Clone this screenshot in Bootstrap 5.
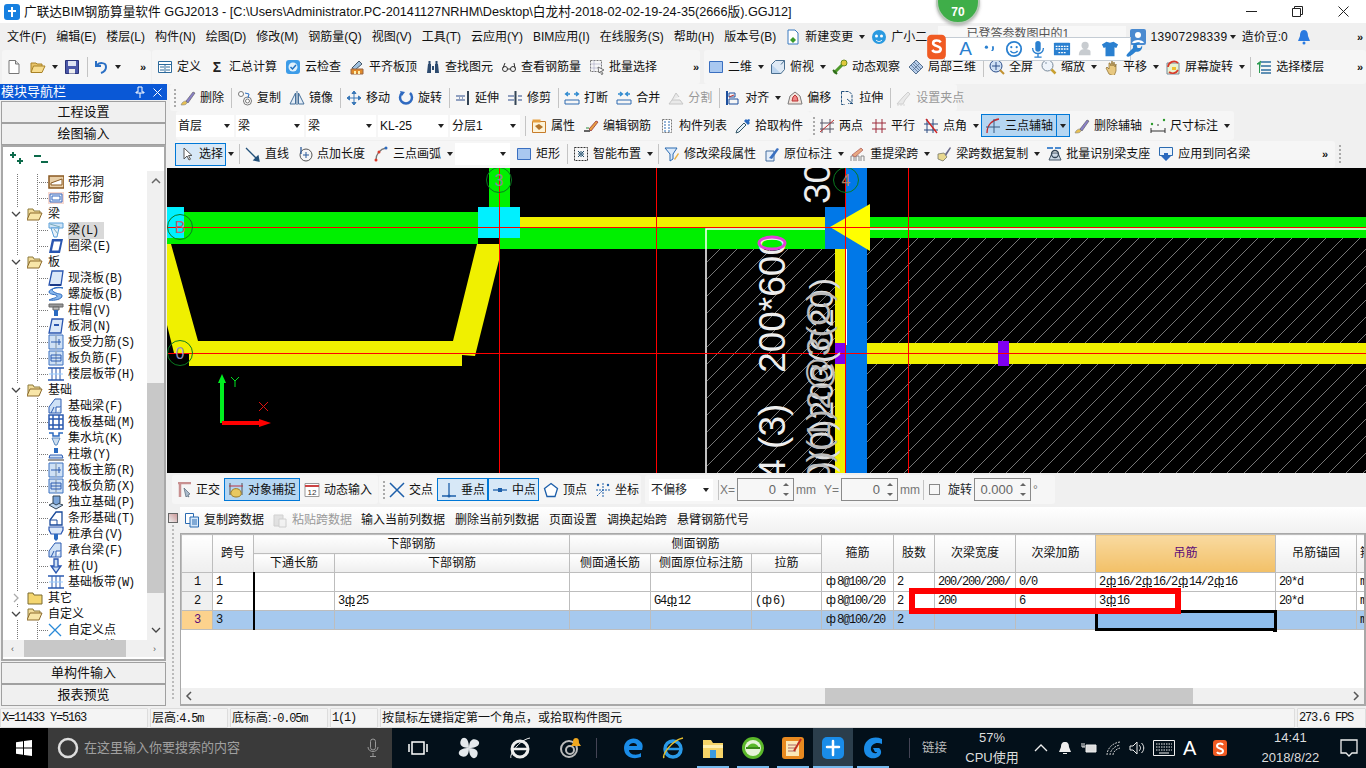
<!DOCTYPE html>
<html lang="zh">
<head>
<meta charset="utf-8">
<title>GGJ2013</title>
<link rel="stylesheet" href="https://cdn.jsdelivr.net/npm/bootstrap@5.3.0/dist/css/bootstrap.min.css">
<script src="https://cdn.jsdelivr.net/npm/bootstrap@5.3.0/dist/js/bootstrap.bundle.min.js"></script>
<style>
html,body{width:1366px;height:768px;overflow:hidden;margin:0}
body{position:relative;background:#f0f0f0;color:#111;font:12px/16px "Liberation Sans","Noto Sans CJK SC",sans-serif}
svg{flex:none;display:block}
.ic{width:16px;height:16px}
/* window chrome */
.titlebar{height:23px;background:#fff;font-size:12.7px;white-space:nowrap}
.titlebar .ttl{margin-left:4px}
.winbtn{width:46px}
.menubar{height:27px;padding-left:2px;position:relative}
.menubar>span{padding:0 5px}
.usr{margin-left:auto}
.inputbox{width:188px;height:21px;background:#f8f8f8;margin:0 4px 0 7px;padding-left:28px;overflow:hidden;color:#555}
.phone{letter-spacing:.35px}
/* toolbars */
.tb{background:#f6f6f6;border-radius:3px;white-space:nowrap}
.ti{display:flex;align-items:center;gap:4px;padding:0 4px;flex:none}
.ti.off{color:#999}
.ti.off svg{opacity:.5}
.ti.sel{background:#d7e8f7;border:1px solid #0078d7;padding:0 2px 0 3px;margin:0;height:23px}
.ti.sel2{background:#b5d6f2;border:1px solid #0078d7;padding:0 3px;height:23px}
.arr{width:10px;height:12px;flex:none;display:flex;align-items:center;justify-content:center}
.arr::after{content:"";border:3px solid transparent;border-top:4px solid #222;border-bottom:0}
.arr.sel2b{width:13px;height:23px;background:#b5d6f2;border:1px solid #0078d7;border-left:0}
.sepv{width:1px;height:20px;background:#c4c4c4;margin:0 1px 0 3px;flex:none}
.grp{width:2px;height:18px;flex:none;background:repeating-linear-gradient(#aaa 0 2px,transparent 2px 4px)}
.chev{font-size:11px;font-weight:700;letter-spacing:-1px;line-height:10px;flex:none}
.row1{height:34px}
.t1{width:149px;margin-left:2px;padding-left:0}
.t2{width:548px;margin-left:1px;padding-left:1px}
.t3{width:662px;margin-left:4px;padding-left:0}
.t1 .chev{margin-left:17px}
.t2 .chev{margin-left:auto;margin-right:2px}
.t3 .chev{margin-left:auto;margin-right:4px}
.mainarea{height:622px}
/* left panel */
.leftp{width:167px;flex:none}
.navtitle{height:16px;margin-bottom:1px;background:#0a58d6;color:#fff;font-size:13px;line-height:16px;padding:0 5px 0 1px}
.navbtn{width:165px;height:22px;margin-left:1px;padding:0;font-size:13px;line-height:20px;background:#f0f0f0;border:1px solid #a0a0a0;border-radius:0;color:#111}
.treebox{width:165px;height:516px;margin:0 0 1px 1px;border:2px solid #a8a8a8;background:#fff;overflow:hidden}
.treetop{height:24px;padding-left:6px;flex:none}
.treemid{height:469px;overflow:hidden;flex:none}
.treelist{width:146px;overflow:hidden;padding-top:3px}
.vbar{width:17px;flex:none;background:#f0f0f0}
.vthumb{height:210px;background:#c8c8c8;margin-top:196px;flex:none}
.sarr{font-size:9px;color:#555;line-height:14px;text-align:center;flex:none}
.hbar{height:17px;background:#f0f0f0;flex:none}
.hthumb{width:102px;height:17px;background:#c8c8c8;margin-left:6px}
.tn{height:16px;white-space:nowrap;display:flex;align-items:center;font-size:12px;
 background:repeating-linear-gradient(#777 0 1px,transparent 1px 2px) 14px 0/1px 100% no-repeat}
.tn .exp{width:12px;height:12px;margin-left:7px;flex:none;background:#fff}
.tn .fold{margin:0 5px 0 5px}
.tn.lf{padding-left:45px;gap:4px;
 background:repeating-linear-gradient(#777 0 1px,transparent 1px 2px) 14px 0/1px 100% no-repeat,
 repeating-linear-gradient(#777 0 1px,transparent 1px 2px) 34px 0/1px 100% no-repeat,
 repeating-linear-gradient(90deg,#777 0 1px,transparent 1px 2px) 34px 8px/11px 1px no-repeat}
.tn.cur>span{background:#d9d9d9;padding-right:6px}
.lat{font-family:"Liberation Mono",monospace;letter-spacing:-1.2px}
/* right side */
.rightp{width:1199px;flex:none}
.rr2{height:27px;padding-left:3px}
.rr3{height:29px;padding-left:9px}
.rr4{height:28px;padding-left:8px}
.r2a{width:787px}
.r3a{width:634px}
.r3b{width:424px;padding-left:3px}
.r4a{width:1160px;height:27px}
.r4a .chev{margin-left:auto;margin-right:8px}
.combo{height:22px;background:#fff;margin-right:2px;padding-left:2px;flex:none;justify-content:space-between;padding-right:2px}
.w58{width:58px}.w68{width:68px}.w70{width:70px}.w55{width:55px}.w64{width:64px}
.cad{height:305px;background:#000}
.cad text{font-family:"Liberation Sans",sans-serif}
.rr5{height:31px;padding-left:5px;margin-bottom:3px}
.r5a{width:206px;height:29px}
.r5b{width:262px;height:29px;margin-left:1px;padding-left:4px}
.r5c{width:410px;height:29px;margin-left:4px;padding-left:4px;color:#777}
.spin{width:57px;height:23px;border:1px solid #8a8a8a;background:#f7f7f7;text-align:right;padding-right:17px;line-height:21px;margin:0 2px;position:relative;flex:none;font-size:13px;color:#666}
.spin::after{content:"";position:absolute;right:4px;top:4px;border:3px solid transparent;border-bottom:3px solid #666;border-top:0}
.spin::before{content:"";position:absolute;right:4px;bottom:4px;border:3px solid transparent;border-top:3px solid #666;border-bottom:0}
.ckb{width:11px;height:11px;border:1px solid #888;background:#f7f7f7;margin:0 8px 0 4px;flex:none}
.gridwrap{height:199px;width:1199px}
.gripcol{width:13px;flex:none;background:repeating-linear-gradient(#bbb 0 2px,transparent 2px 4px) 5px 14px/2px 90% no-repeat}
.closebox{width:10px;height:10px;border:1px solid #666;margin:6px 0 0 1px;background:linear-gradient(45deg,#eee,#c99)}
.gridmain{width:1186px}
.subtb{height:26px;background:linear-gradient(#fff,#f1f1f1);padding-left:0}
.subtb .plain{padding:0 5px}
.gridbox{height:173px;background:#fff;border:1px solid #a8a8a8;border-width:1px 2px 2px 1px;overflow:hidden;position:relative;width:1186px}
.gridbox .gg{table-layout:fixed;width:1185px;border-color:#bdbdbd;margin:0;font-size:12px;--bs-table-bg:transparent}
.c31{width:31px}.c41{width:41px}.c81{width:81px}.c235{width:235px}.c101{width:101px}.c70{width:70px}.c72{width:72px}.c80{width:80px}.c180{width:180px}.c10{width:10px}
.gg th,.gg td{height:19px;padding:0 3px;line-height:15px;white-space:nowrap;overflow:hidden;border:1px solid #bdbdbd;color:#111;font-weight:400;vertical-align:middle}
.gg th{text-align:center;background:linear-gradient(#fff,#eee)}
.gg thead tr:first-child th[rowspan]{height:38px}
.gg td{font-family:"Liberation Mono","Noto Sans CJK SC",monospace;letter-spacing:-1.2px}
.gg td.rh{background:#f0f0f0;text-align:center}
.gg td.lk{border-right:2px solid #000}
.gg tr.curr td{background:#a6c9ee}
.gg tr.curr td.rh{background:#fcd28d;color:#5a0a78}
.gg th.hot{background:linear-gradient(#f9daa0,#f2c067);color:#5a0a78}
.gg tr.curr td.cel{background:#8fbdec;outline:3px solid #000;outline-offset:-2px}
.rb,.rb2{display:inline-block;width:12px;line-height:1;text-align:center;letter-spacing:0;font-family:"Liberation Sans",sans-serif}
.rb2{text-decoration:underline}
.hbar2{height:16px;background:#f0f0f0;flex:none;margin-top:auto}
.hthumb2{width:368px;height:16px;background:#c8c8c8;margin-left:628px}
.hbar2 svg{margin:0 2px}
.redbox{position:absolute;left:909px;top:588px;width:272px;height:26px;border:6px solid #f00;z-index:3}
.handle{position:absolute;left:1273px;top:628px;width:4px;height:4px;background:#000;z-index:3}
/* status + taskbar */
.statusb{height:22px;padding:2px 0 0 0;background:#f0f0f0}
.statusb>div{height:20px;background:#f4f4f4;border:1px solid #ddd;border-radius:1px;padding:0 1px;line-height:18px;margin-right:2px;overflow:hidden;white-space:nowrap;flex:none}
.s1{width:148px}.s2{width:78px}.s3{width:98px}.s4{width:48px}.s5{width:915px}.s6{width:69px;margin-right:0!important}
.taskb{height:40px;background:#03101a;color:#ddd}
.startb{width:48px;height:40px;background:#000}
.search{width:344px;height:40px;background:#3a3a3a;color:#a0a0a0;font-size:13px;padding-left:9px}
.search .q{margin:0 5px 0 0}
.search .mic{margin-left:auto;margin-right:13px}
.tk1{width:51px;height:40px;position:relative}
.tk2{width:40px;height:40px;position:relative}
.tk1 svg,.tk2 svg{width:24px;height:24px}
.tk2.on::after{content:"";position:absolute;left:4px;right:4px;bottom:0;height:2px;background:#76b9ed}
.tk2.act{background:#2b3e4c}
.tk2.act::after{left:0;right:0}
.tsep{width:1px;height:20px;background:#445;flex:none}
.trayt{color:#bbb;font-size:12.5px}
.cpu{width:60px;margin-left:15px;text-align:center;line-height:20px;font-size:13px}
.tray{gap:8px;margin-left:11px}
.clock{width:74px;margin-left:25px;text-align:center;line-height:20px;font-size:13px}
.notif{margin-left:12px}
/* overlays */
.scorebadge{position:absolute;left:936px;top:-20px;width:44px;height:44px;border-radius:50%;background:#3fae49;border:2px solid #b8c8b8;box-shadow:0 2px 3px #8888;color:#fff;font-size:12px;font-weight:700;text-align:center;padding-top:22px;z-index:5}
.sogou{position:absolute;left:944px;top:37px;width:187px;height:24px;background:#fff;border:1px solid #c4ccd4;z-index:6;padding-left:10px;color:#2a80d0}
.sogou svg{width:18px;height:18px;margin:0 1px}
.sogoulogo{position:absolute;left:925px;top:33px;width:23px;height:28px;z-index:7}
.sogoua{font-size:19px;width:21px;text-align:center;flex:none}
</style>
</head>
<body>
<svg width="0" height="0" class="position-absolute">
<defs>
<symbol id="new" viewBox="0 0 16 16"><path d="M3 1.5h6.5l3.5 3.5v9.5H3z" fill="#fff" stroke="#777"/><path d="M9.500 1.500v3.500H13" fill="#ddd" stroke="#777"/></symbol>
<symbol id="open" viewBox="0 0 16 16"><path d="M1 13V4h5l1 1h5v2" fill="#e8c46a" stroke="#a98226"/><path d="M3.500 7H15l-3 6.500H1z" fill="#f7dc8e" stroke="#a98226"/></symbol>
<symbol id="save" viewBox="0 0 16 16"><path d="M1.500 1.500h13v13h-13z" fill="#4b57a8" stroke="#2a3378"/><path d="M4 2h8v5H4z" fill="#dfe3f2"/><path d="M5 10h6v4.500H5z" fill="#eee"/></symbol>
<symbol id="undo" viewBox="0 0 16 16"><path d="M3 2v5h5M3.500 7C6 3 13 3 13 8c0 3-2 5-5 6" fill="none" stroke="#2a6fc4" stroke-width="2"/></symbol>
<symbol id="tbl" viewBox="0 0 16 16"><path d="M1.500 2.500h13v11h-13z" fill="#fff" stroke="#2c6a9c"/><path d="M1.500 5.500h13M3 8h4M3 11h4M9 8h4M9 11h4M8 5.500v8" stroke="#2c6a9c"/></symbol>
<symbol id="cld" viewBox="0 0 16 16"><rect x="1" y="1" width="14" height="14" rx="3" fill="#3d9ce8"/><circle cx="8" cy="8" r="4.500" fill="#dff0fc"/><path d="M5.500 8l2 2 3.500-4" fill="none" stroke="#2070c0" stroke-width="1.500"/></symbol>
<symbol id="lvl" viewBox="0 0 16 16"><path d="M3 9l7-7 3 3-7 6z" fill="#9fc0dd" stroke="#456"/><path d="M2 10h12v5H2z" fill="#e08a2a" stroke="#964"/><path d="M5 12h2v3H5zM9 12h2v3H9z" fill="#fff2b0"/></symbol>
<symbol id="bin" viewBox="0 0 16 16"><path d="M2 14l1-9h3v9zM10 14V5h3l1 9zM7 7h2v4H7zM3.500 2h2v3h-2zM10.500 2h2v3h-2z" fill="#2c4a6e"/></symbol>
<symbol id="gls" viewBox="0 0 16 16"><circle cx="4" cy="10" r="2.500" fill="none" stroke="#333"/><circle cx="12" cy="10" r="2.500" fill="none" stroke="#333"/><path d="M6.500 10h3M2 9l2-5M14 9l-1-5" stroke="#333" fill="none"/></symbol>
<symbol id="bsel" viewBox="0 0 16 16"><path d="M1.500 1.500h11v11h-11z" fill="none" stroke="#777" stroke-dasharray="2 1"/><path d="M1.500 5h11M1.500 9h11M5 1.500v11" stroke="#99b" stroke-dasharray="1 1"/><path d="M9 8l6 3-2.500 1 1.500 3-1.500.5-1-3L10 14z" fill="#fff" stroke="#444" stroke-width=".7"/></symbol>
<symbol id="r2d" viewBox="0 0 16 16"><path d="M1.500 2.500h13v11h-13z" fill="#a9c8f0" stroke="#3a6fc0"/></symbol>
<symbol id="cube" viewBox="0 0 16 16"><path d="M1.500 5.500h9.500v9H1.500z" fill="#bcd5ef" stroke="#4a6f90"/><path d="M1.500 5.500l4-4h9v9l-3.500 4M11 5.500l3.500-4" fill="#dfeaf5" stroke="#4a6f90"/></symbol>
<symbol id="orb" viewBox="0 0 16 16"><path d="M2 14L13 3" stroke="#4f9a2a" stroke-width="3"/><circle cx="12" cy="4" r="3" fill="#e0c83c" stroke="#6a8a20"/><path d="M1 11l4 4" stroke="#2f6a1a" stroke-width="2"/></symbol>
<symbol id="l3d" viewBox="0 0 16 16"><path d="M8 1l7 7-7 7-7-7z" fill="#b7cdea" stroke="#55708f"/><path d="M4.500 4.500l7 7M11.500 4.500l-7 7M6 3l7 7M3 6l7 7" stroke="#55708f" stroke-width=".8"/></symbol>
<symbol id="fsc" viewBox="0 0 16 16"><circle cx="7" cy="7" r="6" fill="#cfe0f5" stroke="#2d4f8a"/><path d="M7 3v8M3 7h8" stroke="#2d4f8a"/><path d="M11 11l4 4" stroke="#c09030" stroke-width="2"/></symbol>
<symbol id="zm" viewBox="0 0 16 16"><circle cx="6.500" cy="6.500" r="5.500" fill="#eef4fb" stroke="#789"/><path d="M4 4h2" stroke="#89a"/><path d="M10.500 10.500l4 4" stroke="#c8a030" stroke-width="2.500"/></symbol>
<symbol id="hnd" viewBox="0 0 16 16"><path d="M6 15L3 9l1-1 2 2V4l1 0 1 3 1-5 1 5 1-4 1 5 1-3v7l-2 5z" fill="#e8c880" stroke="#8a6a2a" stroke-width=".7"/></symbol>
<symbol id="rsc" viewBox="0 0 16 16"><path d="M2 4h12v11H2z" fill="#e9f2d0" stroke="#789"/><path d="M3 8a6 6 0 0 1 10-4" fill="none" stroke="#d83a2a" stroke-width="1.700"/><path d="M13 11a6 6 0 0 1-9 2" fill="none" stroke="#d83a2a" stroke-width="1.700"/><path d="M7 8h4v3H7z" fill="#f0c030"/></symbol>
<symbol id="flr" viewBox="0 0 16 16"><path d="M5 3h10M5 7h10M5 11h10M5 14h10" stroke="#2f6fa0" stroke-width="1.500"/><path d="M5 2L1 5h2.500v9" fill="#2a9a50" stroke="#2a9a50"/></symbol>
<symbol id="del" viewBox="0 0 16 16"><path d="M1 15c1-3 3-4 5-4l1 2c-1 2-3 2-6 2z" fill="#e8c050" stroke="#888" stroke-width=".6"/><path d="M6 11l7-9 2 1-7 10z" fill="#8a80c8" stroke="#555" stroke-width=".6"/></symbol>
<symbol id="cpy" viewBox="0 0 16 16"><circle cx="4" cy="4" r="2.500" fill="#fff" stroke="#777"/><circle cx="10.500" cy="11" r="4" fill="#fff" stroke="#777"/><circle cx="10.500" cy="11" r="2" fill="none" stroke="#777"/><path d="M8 3l4 1-1 4" fill="none" stroke="#2a6fc4"/></symbol>
<symbol id="mir" viewBox="0 0 16 16"><path d="M6.500 3L1 14h5.500zM9.500 3L15 14H9.500z" fill="#e6eef7" stroke="#46709a"/><path d="M8 1v14" stroke="#46709a"/></symbol>
<symbol id="mov" viewBox="0 0 16 16"><path d="M8 1v14M1 8h14M8 1L6 3.500h4zM8 15l-2-2.500h4zM1 8l2.500-2v4zM15 8l-2.500-2v4z" fill="#3a78b8" stroke="#3a78b8"/></symbol>
<symbol id="rot" viewBox="0 0 16 16"><path d="M4 3a6 6 0 1 0 8 0" fill="none" stroke="#2f6ac0" stroke-width="2.500"/><path d="M2 1l5 1-3 4z" fill="#2f6ac0"/></symbol>
<symbol id="ext" viewBox="0 0 16 16"><path d="M1 6h9M1 10h9" stroke="#2a4a8a"/><path d="M4 8h1M7 8h1" stroke="#2a4a8a"/><path d="M13 1v14" stroke="#345" stroke-width="2"/></symbol>
<symbol id="trm" viewBox="0 0 16 16"><path d="M1 6h6M1 10h6M11 6h4M11 10h4" stroke="#2a4a8a"/><path d="M8.500 1v14" stroke="#345" stroke-width="2"/></symbol>
<symbol id="brk" viewBox="0 0 16 16"><path d="M1 10h14M1 14h14M1 10v4M15 10v4" stroke="#2f6ab0"/><path d="M2 4h4M14 4h-4M4 2L1.500 4 4 6M12 2l2.500 2L12 6" fill="none" stroke="#2f8ad0" stroke-width="1.300"/></symbol>
<symbol id="mrg" viewBox="0 0 16 16"><path d="M1 10h14M1 14h14M1 10v4M15 10v4" stroke="#2f6ab0"/><path d="M2 4h4M14 4h-4M4 2L6.500 4 4 6M12 2L9.500 4 12 6" fill="none" stroke="#2f8ad0" stroke-width="1.300"/></symbol>
<symbol id="spl" viewBox="0 0 16 16"><path d="M1 14h14l-3-4H4zM4 10l4-7 3 4" fill="#ddd" stroke="#999"/></symbol>
<symbol id="alg" viewBox="0 0 16 16"><path d="M2 1v14" stroke="#1d4f9c" stroke-width="2"/><path d="M4 3h6v4H4zM4 9h9v5H4z" fill="none" stroke="#1d4f9c"/><path d="M4 7l5-2" stroke="#c03030"/></symbol>
<symbol id="ofs" viewBox="0 0 16 16"><path d="M1 14l2-8 5-4 5 4 2 8z" fill="#f4e4dc" stroke="#7a7a7a"/><path d="M5 11l1-4 2-2 2 2 1 4z" fill="#e88" stroke="#b33"/></symbol>
<symbol id="strt" viewBox="0 0 16 16"><path d="M2.500 1.500H10l3 3v9h-4M2.500 1.500v13H6" fill="none" stroke="#24527e" stroke-dasharray="3 1"/><path d="M8 9l6 5" stroke="#24527e"/></symbol>
<symbol id="gip" viewBox="0 0 16 16"><path d="M1 14l6-7 5-5 2 2-5 6-2 4z" fill="#ddd" stroke="#aaa"/><path d="M1 15h8" stroke="#bbb" stroke-dasharray="2 1"/></symbol>
<symbol id="atr" viewBox="0 0 16 16"><path d="M1.500 3.500h13v11h-13z" fill="#fdf3d8" stroke="#c77c2a"/><path d="M1.500 1.500h8v3h-8z" fill="#e7a040"/><path d="M4 8l4-2 4 3-4 3z" fill="#b4752a"/></symbol>
<symbol id="edt" viewBox="0 0 16 16"><path d="M1 13h6" stroke="#333" stroke-width="1.500"/><path d="M6 11l7-8 2 1-7 9z" fill="#e8a040" stroke="#933" stroke-width=".8"/><path d="M3 10h3" stroke="#2c8a3a"/></symbol>
<symbol id="lst" viewBox="0 0 16 16"><path d="M3.500 1.500h9v13h-9z" fill="#fff" stroke="#777" stroke-dasharray="2 1"/><path d="M5 4h2M9 4h2M5 7h2M9 7h2M5 10h2M9 10h2M5 13h2M9 13h2" stroke="#2a6ab0"/></symbol>
<symbol id="pck" viewBox="0 0 16 16"><path d="M1 15l1-3 7-7 2 2-7 7z" fill="#e6f2fb" stroke="#356"/><path d="M9 3l4 4 2-2-1-1 1-2-1-1-2 1-1-1z" fill="#2a6ac0"/></symbol>
<symbol id="twp" viewBox="0 0 16 16"><path d="M3 1v14M11 1v14M1 5h14M1 11h14" stroke="#556"/><path d="M1 14L15 2" stroke="#c03030"/></symbol>
<symbol id="par" viewBox="0 0 16 16"><path d="M5 1v14M11 1v14M1 5h14M1 11h14" stroke="#9c2a3a"/></symbol>
<symbol id="ang" viewBox="0 0 16 16"><path d="M4 1v14M10 1v14M1 6h14M1 12h14" stroke="#2a4a80"/><path d="M3 1l11 14" stroke="#d02020" stroke-width="1.300"/></symbol>
<symbol id="arc3" viewBox="0 0 16 16"><path d="M2 15C2 7 7 2 14 1" fill="none" stroke="#c8282a" stroke-width="1.300"/><path d="M1 9h14M9 1v14" stroke="#3a5a80"/></symbol>
<symbol id="dim" viewBox="0 0 16 16"><path d="M1 10v5M15 10v5M1 13h14" stroke="#333"/><circle cx="2" cy="6" r="1.200" fill="#2a9a2a"/><circle cx="14" cy="2" r="1.200" fill="#2a9a2a"/><circle cx="8" cy="7" r="1" fill="#777"/></symbol>
<symbol id="sel" viewBox="0 0 16 16"><path d="M5 2v11l3-3 2 4 1.500-.8-2-3.700H13z" fill="#fff" stroke="#555"/></symbol>
<symbol id="lin" viewBox="0 0 16 16"><path d="M1 2l12 12M14 15l-5-1 4-4z" stroke="#23517a" stroke-width="1.300" fill="#23517a"/></symbol>
<symbol id="pln" viewBox="0 0 16 16"><circle cx="9" cy="9" r="6" fill="none" stroke="#555"/><path d="M9 6v6M6 9h6" stroke="#2a5a9a"/><path d="M4 1v7" stroke="#2a5a9a" stroke-width="1.300"/></symbol>
<symbol id="arc" viewBox="0 0 16 16"><path d="M3 14C3 8 7 3 13 2" fill="none" stroke="#777" stroke-width="1.300"/><circle cx="3" cy="14" r="1.500" fill="#d83a2a"/><circle cx="6" cy="6" r="1.500" fill="#d83a2a"/><circle cx="13" cy="2" r="1.500" fill="#2a6ac0"/></symbol>
<symbol id="smt" viewBox="0 0 16 16"><path d="M1.500 1.500h13v13h-13z" fill="none" stroke="#333" stroke-dasharray="2 1"/><path d="M5 8h6M8 5v6M5 5l2 2M11 5L9 7M5 11l2-2M11 11L9 9" stroke="#1a4a6a"/></symbol>
<symbol id="flt" viewBox="0 0 16 16"><path d="M1 2h12L9 8v5l-3 2V8z" fill="#dbeafa" stroke="#2a6ab0"/><path d="M10 13l4-6 1 1-4 6z" fill="#e8b040"/></symbol>
<symbol id="mrk" viewBox="0 0 16 16"><path d="M2 5h8v10H2z" fill="#e4eefa" stroke="#456fa0"/><path d="M5 12L13 2l2 1-7 10z" fill="#3a70c0"/></symbol>
<symbol id="rex" viewBox="0 0 16 16"><path d="M1 15v-5h3v5M6 15v-5h3v5M11 15v-5h3v5" fill="none" stroke="#888"/><path d="M2 9l9-7 2 2-8 7z" fill="#e8a880" stroke="#a55" stroke-width=".7"/></symbol>
<symbol id="brm" viewBox="0 0 16 16"><path d="M2 8l6-1 3 4-4 4-5-2z" fill="#e8d890" stroke="#776" stroke-width=".8"/><path d="M9 8l5-7 1 1-5 8z" fill="#6a6a8a"/></symbol>
<symbol id="bid" viewBox="0 0 16 16"><path d="M1 1h6v2H1zM9 1h6v2H9z" fill="#4a8ad0"/><path d="M3 14l3-7h6l3 7z" fill="#cdd9e6" stroke="#456"/><circle cx="9" cy="8" r="3.500" fill="none" stroke="#345" stroke-width="1.300"/></symbol>
<symbol id="apl" viewBox="0 0 16 16"><path d="M1.500 1.500h13v8h-13z" fill="#eaf3fc" stroke="#2a6ab0"/><path d="M6 7h4v3h3l-5 5-5-5h3z" fill="#2a6ac0"/></symbol>
<symbol id="ort" viewBox="0 0 16 16"><path d="M2 1h13M4 1v14" stroke="#c89090" stroke-width="2.500"/><path d="M8 6l6 6-2 1 1 2-2-1-1 1z" fill="#abc" stroke="#567" stroke-width=".7"/></symbol>
<symbol id="snp" viewBox="0 0 16 16"><path d="M2 1v12M14 1v12" stroke="#555"/><path d="M1 4h14" stroke="#b34"/><path d="M3 10c2-5 9-4 10 0s-2 5-5 5-6-2-5-5z" fill="#e8c860" stroke="#9a7a28"/></symbol>
<symbol id="dyn" viewBox="0 0 16 16"><path d="M1 1.500h14v13H1z" fill="#fff" stroke="#999"/><path d="M1 4h14" stroke="#c44" stroke-width="2"/><text x="8" y="13" font-size="8" text-anchor="middle" fill="#333">12</text></symbol>
<symbol id="xpt" viewBox="0 0 16 16"><path d="M1 1l14 14M15 1L1 15" stroke="#1d5faa" stroke-width="1.500"/></symbol>
<symbol id="prp" viewBox="0 0 16 16"><path d="M8 1v13M1 14h14" stroke="#1d5faa" stroke-width="1.300"/><circle cx="8" cy="14" r="1.500" fill="#1d5faa"/></symbol>
<symbol id="mid" viewBox="0 0 16 16"><path d="M1 8h14" stroke="#1d5faa" stroke-width="1.300"/><path d="M6 6h4v4H6z" fill="#1d5faa"/></symbol>
<symbol id="vtx" viewBox="0 0 16 16"><path d="M8 1.500l6.500 5-2.500 8H4l-2.500-8z" fill="#fff" stroke="#1d5faa" stroke-width="1.300"/></symbol>
<symbol id="crd" viewBox="0 0 16 16"><path d="M2 14L8 8M8 1v14M1 8h14" stroke="#1d5faa" stroke-dasharray="2 1"/><circle cx="3" cy="3" r="1.200" fill="#1d5faa"/><circle cx="13" cy="3" r="1.200" fill="#1d5faa"/></symbol>
<symbol id="cpd" viewBox="0 0 16 16"><path d="M1.500 1.500h8v10h-8z" fill="#fff" stroke="#2a6ab0"/><path d="M6 5h8.500v10H6z" fill="#d6e8fa" stroke="#2a6ab0"/><path d="M8 8h5M8 10h5M8 12h5" stroke="#2a6ab0"/></symbol>
<symbol id="pst" viewBox="0 0 16 16"><path d="M2 3h9v11H2z" fill="#ccc" stroke="#aaa"/><path d="M7 7h7v8H7z" fill="#eee" stroke="#aaa"/></symbol>
<!-- tree icons -->
<symbol id="t-hole" viewBox="0 0 16 16"><path d="M1 2h15v12H1z" fill="#e8cfa8" stroke="#8a5a22" stroke-width="1.500"/><path d="M3 9L14 5v6H3z" fill="#fff" stroke="#8a5a22"/></symbol>
<symbol id="t-win" viewBox="0 0 16 16"><path d="M0 2h16v12H0z" fill="#f6d8d0"/><path d="M2 4h12v8H2z" fill="#e4eefb" stroke="#3a6ac0"/><path d="M4 6h8v4H4z" fill="#fff" stroke="#3a6ac0"/></symbol>
<symbol id="t-beam" viewBox="0 0 16 16"><path d="M1 1h14v5H1z" fill="#cfe3f6" stroke="#5aa0d8"/><path d="M3 6h8l-2 9H6z" fill="#e6f0fa" stroke="#5aa0d8"/><path d="M2 2l10 3M6 7l4 5" stroke="#7ab"/></symbol>
<symbol id="t-ring" viewBox="0 0 16 16"><path d="M4 1h11l-3 14H1z" fill="#2a56b0"/><path d="M6 3.500h6.500l-2 9H4z" fill="#fff"/></symbol>
<symbol id="t-slab" viewBox="0 0 16 16"><path d="M4 1h11l-2 14H1z" fill="#dbe8f8" stroke="#2a56b0" stroke-width="1.300"/><path d="M2 15h11" stroke="#1a3a8a" stroke-width="2"/></symbol>
<symbol id="t-sp" viewBox="0 0 16 16"><path d="M15 2C8 0 1 3 6 6s8 1 8 4-7 5-13 4c4-2 8-2 8-4S1 9 1 6s8-5 14-4z" fill="#8ab8ec" stroke="#2a6ac0"/></symbol>
<symbol id="t-cap" viewBox="0 0 16 16"><path d="M1 2h14v3H1z" fill="#999" stroke="#666"/><path d="M5 5h6v3H5z" fill="#bbb" stroke="#666"/><path d="M6 8h4v6H6z" fill="#2a6ac0"/></symbol>
<symbol id="t-sh" viewBox="0 0 16 16"><path d="M4 1h11l-2 14H1z" fill="#dbe8f8" stroke="#2a56b0" stroke-width="1.300"/><path d="M6 6h5v2H6z" fill="#2a56b0"/></symbol>
<symbol id="t-rb" viewBox="0 0 16 16"><path d="M1 1h14v14H1z" fill="#cfe1f5" stroke="#3a70c0"/><path d="M8 1v14" stroke="#9ab" stroke-width="1.500"/><path d="M3 8h10M11 5v6" stroke="#2a5ab0"/></symbol>
<symbol id="t-rn" viewBox="0 0 16 16"><path d="M1 1h14v14H1z" fill="#cfe1f5" stroke="#3a70c0"/><path d="M8 1v14" stroke="#9ab" stroke-width="1.500"/><path d="M3 5h10v6H3zM3 8h10" fill="none" stroke="#2a5ab0"/></symbol>
<symbol id="t-bd" viewBox="0 0 16 16"><path d="M0 2h16M0 14h16" stroke="#2a5ab0" stroke-width="1.500"/><path d="M4 2v12M8 2v12M12 2v12" stroke="#2a5ab0"/><path d="M1 8h14" stroke="#9cf"/></symbol>
<symbol id="t-fb" viewBox="0 0 16 16"><path d="M1 15V9l6-8h6v14z" fill="#cfe1f5" stroke="#2a5ab0"/><path d="M8 15V9h5M3 15l3-6" fill="#fff" stroke="#2a5ab0"/></symbol>
<symbol id="t-rf" viewBox="0 0 16 16"><path d="M1 1h14v14H1z" fill="#fff" stroke="#2a5ab0" stroke-width="1.500"/><path d="M1 5h14M1 11h14M5 1v14M11 1v14" stroke="#2a5ab0" stroke-width="1.500"/></symbol>
<symbol id="t-pit" viewBox="0 0 16 16"><path d="M1 3h4v3h6V3h4" fill="none" stroke="#2a6ac0" stroke-width="1.500"/><path d="M4 8h8l-3 7H7z" fill="#cde" stroke="#5a8ac0"/></symbol>
<symbol id="t-dun" viewBox="0 0 16 16"><path d="M6 2h4v5H6z" fill="#2a6ac0"/><path d="M2 9h12l1 3H1z" fill="#cfe1f5" stroke="#2a5ab0"/><path d="M0 13h16v2H0z" fill="#999"/></symbol>
<symbol id="t-ind" viewBox="0 0 16 16"><path d="M1 11l6-3 8 3-7 4z" fill="#bcd5ef" stroke="#345"/><path d="M5 9V2h7v7l-4 2z" fill="#7aa4d8" stroke="#345"/></symbol>
<symbol id="t-str" viewBox="0 0 16 16"><path d="M2 15V10l6-8h6v13z" fill="#fff" stroke="#1a4a9a" stroke-width="1.300"/><path d="M2 10h7v5" fill="none" stroke="#1a4a9a"/></symbol>
<symbol id="t-pc" viewBox="0 0 16 16"><path d="M1 1h14v3l-2 4H3L1 4z" fill="#dbe8f8" stroke="#2a56b0" stroke-width="1.200"/><path d="M6 8h4v5l-2 2-2-2z" fill="#2a6ac0"/></symbol>
<symbol id="t-pl" viewBox="0 0 16 16"><path d="M6 1h4v7h3l-5 7-5-7h3z" fill="#cfe1f5" stroke="#2a56b0" stroke-width="1.300"/><path d="M4 9h8" stroke="#2a56b0"/></symbol>
<symbol id="t-pt" viewBox="0 0 16 16"><path d="M1 2l12 12M13 2L1 14" stroke="#2a8ad8" stroke-width="1.300"/></symbol>
<symbol id="folder" viewBox="0 0 16 16"><path d="M1 13V3h5l1 2h6v2" fill="#f2dc9a" stroke="#8c7a3c"/><path d="M3 7h12l-3 7H0z" fill="#f8e6a8" stroke="#8c6a2c"/></symbol>
<symbol id="folderc" viewBox="0 0 16 16"><path d="M1 3h5l1 2h8v9H1z" fill="#f4d670" stroke="#7a6a30"/></symbol>
<symbol id="cdn" viewBox="0 0 12 12"><path d="M2 4l4 4 4-4" fill="none" stroke="#444" stroke-width="1.300"/></symbol>
<symbol id="crt" viewBox="0 0 12 12"><path d="M4 2l4 4-4 4" fill="none" stroke="#aaa" stroke-width="1.300"/></symbol>
<symbol id="crtd" viewBox="0 0 12 12"><path d="M4 2l4 4-4 4" fill="none" stroke="#555" stroke-width="1.500"/></symbol>
<symbol id="cltd" viewBox="0 0 12 12"><path d="M8 2L4 6l4 4" fill="none" stroke="#555" stroke-width="1.500"/></symbol>
<symbol id="sup" viewBox="0 0 12 12"><path d="M2 8l4-4 4 4" fill="none" stroke="#666" stroke-width="1.500"/></symbol>
<pattern id="hat" width="17" height="17" patternUnits="userSpaceOnUse"><path d="M0 17L17 0" stroke="#a8a8a8" stroke-width=".7"/></pattern>
</defs>
</svg>

<div class="scorebadge">70</div>
<svg class="sogoulogo" viewBox="0 0 24 33"><rect x="1" y="2" width="22" height="29" rx="5" fill="#f05a22"/><path d="M17 11c-2-3-9-3-9 1 0 4 9 3 9 7 0 5-8 4-10 1" fill="none" stroke="#fff" stroke-width="3"/></svg>
<div class="sogou d-flex align-items-center gap-1">
  <span class="sogoua">A</span>
  <svg viewBox="0 0 20 20"><circle cx="6" cy="8" r="1.800" fill="#2a80d0"/><path d="M12 11c1 1 2-1 1-4" stroke="#2a80d0" stroke-width="2" fill="none"/></svg>
  <svg viewBox="0 0 20 20"><circle cx="10" cy="10" r="8" fill="none" stroke="#2a80d0" stroke-width="2"/><circle cx="7" cy="8" r="1.200" fill="#2a80d0"/><circle cx="13" cy="8" r="1.200" fill="#2a80d0"/><path d="M6 12c2 3 6 3 8 0" fill="none" stroke="#2a80d0" stroke-width="1.500"/></svg>
  <svg viewBox="0 0 20 20"><rect x="7" y="1" width="6" height="12" rx="3" fill="#2a80d0"/><path d="M4 9c0 8 12 8 12 0M10 15v4M6 19h8" fill="none" stroke="#2a80d0" stroke-width="1.500"/></svg>
  <svg viewBox="0 0 20 20"><rect x="1" y="3" width="18" height="14" rx="1" fill="#2a80d0"/><path d="M3 7h14M3 10h14M6 14h8" stroke="#fff" stroke-width="1.500" stroke-dasharray="2 1"/></svg>
  <svg viewBox="0 0 20 20"><circle cx="9" cy="6" r="4" fill="#c8ccd0"/><path d="M2 17c0-6 4-7 7-7s6 1 6 3v4z" fill="#c8ccd0"/></svg>
  <svg viewBox="0 0 20 20"><path d="M6 2l4 1 4-1 5 3-2 4-2-1v10H5V8L3 9 1 5z" fill="#2a80d0"/></svg>
  <svg viewBox="0 0 20 20"><path d="M2 18c-1-1 0-2 7-9-1-4 3-8 8-6l-4 3 1 3 3 0 2-3c1 5-4 8-7 7-7 6-9 6-10 5z" fill="#2a80d0"/></svg>
</div>
<div class="redbox"></div>
<div class="handle"></div>

<!-- title -->
<div class="titlebar d-flex align-items-center">
  <svg class="ic ms-1" viewBox="0 0 16 16"><rect width="16" height="16" rx="3" fill="#1780e0"/><path d="M8 3v10M4 7h8" stroke="#fff" stroke-width="2"/></svg>
  <span class="ttl">广联达BIM钢筋算量软件 GGJ2013 - [C:\Users\Administrator.PC-20141127NRHM\Desktop\白龙村-2018-02-02-19-24-35(2666版).GGJ12]</span>
  <div class="ms-auto d-flex">
    <div class="winbtn d-flex justify-content-center"><svg width="11" height="11" viewBox="0 0 11 11"><path d="M0 5.500h11" stroke="#222"/></svg></div>
    <div class="winbtn d-flex justify-content-center"><svg width="11" height="11" viewBox="0 0 11 11"><path d="M.5 2.500h8v8h-8zM2.500 2.500v-2h8v8h-2" fill="none" stroke="#222"/></svg></div>
    <div class="winbtn d-flex justify-content-center"><svg width="11" height="11" viewBox="0 0 11 11"><path d="M.5.500l10 10M10.500.500l-10 10" stroke="#222"/></svg></div>
  </div>
</div>

<!-- menu -->
<div class="menubar d-flex align-items-center">
  <span>文件(F)</span><span>编辑(E)</span><span>楼层(L)</span><span>构件(N)</span><span>绘图(D)</span><span>修改(M)</span><span>钢筋量(Q)</span><span>视图(V)</span><span>工具(T)</span><span>云应用(Y)</span><span>BIM应用(I)</span><span>在线服务(S)</span><span>帮助(H)</span><span>版本号(B)</span>
  <div class="ti"><svg class="ic" viewBox="0 0 16 16"><path d="M3 1h7l3 3v11H3z" fill="#fff" stroke="#3a7ac0"/><path d="M8 8l3 3-3 3-3-3z" fill="#3a9a2a"/></svg>新建变更</div><div class="arr"></div>
  <div class="ti"><svg class="ic" viewBox="0 0 16 16"><circle cx="8" cy="8" r="7" fill="#2a9ae0"/><circle cx="5.500" cy="7" r="1.500" fill="#fff"/><circle cx="10.500" cy="7" r="1.500" fill="#fff"/><path d="M5 11c2 2 4 2 6 0" stroke="#fff" fill="none"/></svg>广小二</div>
  <div class="inputbox">已登答参数图中的1</div>
  <svg class="ic" viewBox="0 0 16 16"><rect width="16" height="16" rx="2" fill="#4a8ad0"/><circle cx="8" cy="6" r="3" fill="#fff"/><path d="M2 14c1-4 11-4 12 0z" fill="#fff"/></svg>
  <span class="p-0 ms-1 phone">13907298339</span><div class="arr"></div><span class="p-0 ms-1">造价豆:0</span>
  <svg class="ic ms-2" viewBox="0 0 16 16"><path d="M8 1c3 0 4 3 4 6l2 5H2l2-5c0-3 1-6 4-6z" fill="#2a7ae0"/><circle cx="8" cy="14" r="1.500" fill="#2a7ae0"/></svg>
  <span class="chev usr pe-1">»</span>
</div>

<!-- toolbar row 1 -->
<div class="row1 d-flex align-items-center">
  <div class="tb t1 d-flex align-items-center h-100">
    <div class="ti"><svg class="ic"><use href="#new"/></svg></div>
    <div class="ti"><svg class="ic"><use href="#open"/></svg></div><div class="arr"></div>
    <div class="ti"><svg class="ic"><use href="#save"/></svg></div><div class="sepv"></div>
    <div class="ti"><svg class="ic"><use href="#undo"/></svg></div><div class="arr"></div>
    <span class="chev">»</span>
  </div>
  <div class="tb t2 d-flex align-items-center h-100">
    <div class="ti"><svg class="ic"><use href="#tbl"/></svg>定义</div>
    <div class="ti"><svg class="ic" viewBox="0 0 16 16"><text x="8" y="13" font-size="14" font-weight="700" text-anchor="middle" fill="#222">Σ</text></svg>汇总计算</div>
    <div class="ti"><svg class="ic"><use href="#cld"/></svg>云检查</div>
    <div class="ti"><svg class="ic"><use href="#lvl"/></svg>平齐板顶</div>
    <div class="ti"><svg class="ic"><use href="#bin"/></svg>查找图元</div>
    <div class="ti"><svg class="ic"><use href="#gls"/></svg>查看钢筋量</div>
    <div class="ti"><svg class="ic"><use href="#bsel"/></svg>批量选择</div>
    <span class="chev">»</span>
  </div>
  <div class="tb t3 d-flex align-items-center h-100">
    <div class="ti"><svg class="ic"><use href="#r2d"/></svg>二维</div><div class="arr"></div>
    <div class="ti"><svg class="ic"><use href="#cube"/></svg>俯视</div><div class="arr"></div>
    <div class="ti"><svg class="ic"><use href="#orb"/></svg>动态观察</div>
    <div class="ti"><svg class="ic"><use href="#l3d"/></svg>局部三维</div><div class="sepv"></div>
    <div class="ti"><svg class="ic"><use href="#fsc"/></svg>全屏</div>
    <div class="ti"><svg class="ic"><use href="#zm"/></svg>缩放</div><div class="arr"></div>
    <div class="ti"><svg class="ic"><use href="#hnd"/></svg>平移</div><div class="arr"></div>
    <div class="ti"><svg class="ic"><use href="#rsc"/></svg>屏幕旋转</div><div class="arr"></div><div class="sepv"></div>
    <div class="ti"><svg class="ic"><use href="#flr"/></svg>选择楼层</div>
    <span class="chev">»</span>
  </div>
</div>

<div class="mainarea d-flex">
  <!-- left nav -->
  <div class="leftp d-flex flex-column">
    <div class="navtitle d-flex align-items-center justify-content-between">模块导航栏
      <span class="d-flex align-items-center gap-2"><svg width="10" height="12" viewBox="0 0 10 12"><path d="M3 1h4v5h2v1H1V6h2zM5 7v5" fill="none" stroke="#fff"/></svg><svg width="9" height="9" viewBox="0 0 9 9"><path d="M.5.500l8 8M8.500.500l-8 8" stroke="#fff"/></svg></span>
    </div>
    <button class="btn navbtn">工程设置</button>
    <button class="btn navbtn">绘图输入</button>
    <div class="treebox d-flex flex-column">
      <div class="treetop d-flex align-items-center gap-2">
        <svg width="16" height="16" viewBox="0 0 16 16"><path d="M4 1v6M1 4h6M11 7v6M8 10h6" stroke="#0c6a4a" stroke-width="2"/></svg>
        <svg width="16" height="16" viewBox="0 0 16 16"><path d="M1 5h7M8 11h7" stroke="#0c6a4a" stroke-width="2"/></svg>
      </div>
      <div class="treemid d-flex">
        <div class="treelist flex-grow-1">
          <div class="tn lf"><svg class="ic"><use href="#t-hole"/></svg><span>带形洞</span></div>
          <div class="tn lf"><svg class="ic"><use href="#t-win"/></svg><span>带形窗</span></div>
          <div class="tn"><svg class="exp"><use href="#cdn"/></svg><svg class="ic fold"><use href="#folder"/></svg>梁</div>
          <div class="tn lf cur"><svg class="ic"><use href="#t-beam"/></svg><span>梁<span class="lat">(L)</span></span></div>
          <div class="tn lf"><svg class="ic"><use href="#t-ring"/></svg><span>圈梁<span class="lat">(E)</span></span></div>
          <div class="tn"><svg class="exp"><use href="#cdn"/></svg><svg class="ic fold"><use href="#folder"/></svg>板</div>
          <div class="tn lf"><svg class="ic"><use href="#t-slab"/></svg><span>现浇板<span class="lat">(B)</span></span></div>
          <div class="tn lf"><svg class="ic"><use href="#t-sp"/></svg><span>螺旋板<span class="lat">(B)</span></span></div>
          <div class="tn lf"><svg class="ic"><use href="#t-cap"/></svg><span>柱帽<span class="lat">(V)</span></span></div>
          <div class="tn lf"><svg class="ic"><use href="#t-sh"/></svg><span>板洞<span class="lat">(N)</span></span></div>
          <div class="tn lf"><svg class="ic"><use href="#t-rb"/></svg><span>板受力筋<span class="lat">(S)</span></span></div>
          <div class="tn lf"><svg class="ic"><use href="#t-rn"/></svg><span>板负筋<span class="lat">(F)</span></span></div>
          <div class="tn lf"><svg class="ic"><use href="#t-bd"/></svg><span>楼层板带<span class="lat">(H)</span></span></div>
          <div class="tn"><svg class="exp"><use href="#cdn"/></svg><svg class="ic fold"><use href="#folder"/></svg>基础</div>
          <div class="tn lf"><svg class="ic"><use href="#t-fb"/></svg><span>基础梁<span class="lat">(F)</span></span></div>
          <div class="tn lf"><svg class="ic"><use href="#t-rf"/></svg><span>筏板基础<span class="lat">(M)</span></span></div>
          <div class="tn lf"><svg class="ic"><use href="#t-pit"/></svg><span>集水坑<span class="lat">(K)</span></span></div>
          <div class="tn lf"><svg class="ic"><use href="#t-dun"/></svg><span>柱墩<span class="lat">(Y)</span></span></div>
          <div class="tn lf"><svg class="ic"><use href="#t-rb"/></svg><span>筏板主筋<span class="lat">(R)</span></span></div>
          <div class="tn lf"><svg class="ic"><use href="#t-rn"/></svg><span>筏板负筋<span class="lat">(X)</span></span></div>
          <div class="tn lf"><svg class="ic"><use href="#t-ind"/></svg><span>独立基础<span class="lat">(P)</span></span></div>
          <div class="tn lf"><svg class="ic"><use href="#t-str"/></svg><span>条形基础<span class="lat">(T)</span></span></div>
          <div class="tn lf"><svg class="ic"><use href="#t-pc"/></svg><span>桩承台<span class="lat">(V)</span></span></div>
          <div class="tn lf"><svg class="ic"><use href="#t-fb"/></svg><span>承台梁<span class="lat">(F)</span></span></div>
          <div class="tn lf"><svg class="ic"><use href="#t-pl"/></svg><span>桩<span class="lat">(U)</span></span></div>
          <div class="tn lf"><svg class="ic"><use href="#t-bd"/></svg><span>基础板带<span class="lat">(W)</span></span></div>
          <div class="tn"><svg class="exp"><use href="#crt"/></svg><svg class="ic fold"><use href="#folderc"/></svg>其它</div>
          <div class="tn"><svg class="exp"><use href="#cdn"/></svg><svg class="ic fold"><use href="#folder"/></svg>自定义</div>
          <div class="tn lf"><svg class="ic"><use href="#t-pt"/></svg><span>自定义点</span></div>
          <div class="tn lf"><svg class="ic"><use href="#t-win"/></svg><span>自定义线</span></div>
        </div>
        <div class="vbar d-flex flex-column align-items-center">
          <svg class="mt-1" width="12" height="12"><use href="#sup"/></svg>
          <div class="vthumb w-100"></div>
          <svg class="mt-auto mb-1" width="12" height="12"><use href="#cdn"/></svg>
        </div>
      </div>
      <div class="hbar d-flex align-items-center">
        <span class="sarr ps-2 pe-1">‹</span><div class="hthumb"></div><span class="sarr ms-auto pe-2">›</span>
      </div>
    </div>
    <button class="btn navbtn">单构件输入</button>
    <button class="btn navbtn">报表预览</button>
  </div>

  <!-- right -->
  <div class="rightp d-flex flex-column">
    <div class="rr2 d-flex align-items-stretch">
      <div class="tb r2a d-flex align-items-center">
        <div class="grp ms-1"></div>
        <div class="ti"><svg class="ic"><use href="#del"/></svg>删除</div><div class="sepv"></div>
        <div class="ti"><svg class="ic"><use href="#cpy"/></svg>复制</div>
        <div class="ti"><svg class="ic"><use href="#mir"/></svg>镜像</div><div class="sepv"></div>
        <div class="ti"><svg class="ic"><use href="#mov"/></svg>移动</div>
        <div class="ti"><svg class="ic"><use href="#rot"/></svg>旋转</div><div class="sepv"></div>
        <div class="ti"><svg class="ic"><use href="#ext"/></svg>延伸</div>
        <div class="ti"><svg class="ic"><use href="#trm"/></svg>修剪</div><div class="sepv"></div>
        <div class="ti"><svg class="ic"><use href="#brk"/></svg>打断</div>
        <div class="ti"><svg class="ic"><use href="#mrg"/></svg>合并</div>
        <div class="ti off"><svg class="ic"><use href="#spl"/></svg>分割</div><div class="sepv"></div>
        <div class="ti"><svg class="ic"><use href="#alg"/></svg>对齐</div><div class="arr"></div>
        <div class="ti"><svg class="ic"><use href="#ofs"/></svg>偏移</div>
        <div class="ti"><svg class="ic"><use href="#strt"/></svg>拉伸</div><div class="sepv"></div>
        <div class="ti off"><svg class="ic"><use href="#gip"/></svg>设置夹点</div>
      </div>
    </div>
    <div class="rr3 d-flex align-items-stretch">
      <div class="tb r3a d-flex align-items-center">
        <div class="combo w58 d-flex align-items-center">首层<div class="arr"></div></div>
        <div class="combo w68 d-flex align-items-center">梁<div class="arr"></div></div>
        <div class="combo w70 d-flex align-items-center">梁<div class="arr"></div></div>
        <div class="combo w70 d-flex align-items-center">KL-25<div class="arr"></div></div>
        <div class="combo w70 d-flex align-items-center">分层1<div class="arr"></div></div>
        <div class="sepv"></div>
        <div class="ti"><svg class="ic"><use href="#atr"/></svg>属性</div>
        <div class="ti"><svg class="ic"><use href="#edt"/></svg>编辑钢筋</div>
        <div class="ti"><svg class="ic"><use href="#lst"/></svg>构件列表</div>
        <div class="ti"><svg class="ic"><use href="#pck"/></svg>拾取构件</div>
      </div>
      <div class="tb r3b d-flex align-items-center">
        <div class="grp"></div>
        <div class="ti"><svg class="ic"><use href="#twp"/></svg>两点</div>
        <div class="ti"><svg class="ic"><use href="#par"/></svg>平行</div>
        <div class="ti"><svg class="ic"><use href="#ang"/></svg>点角</div><div class="arr"></div>
        <div class="ti sel2"><svg class="ic"><use href="#arc3"/></svg>三点辅轴</div><div class="arr sel2b"></div>
        <div class="ti"><svg class="ic"><use href="#del"/></svg>删除辅轴</div>
        <div class="ti"><svg class="ic"><use href="#dim"/></svg>尺寸标注</div><div class="arr"></div>
      </div>
    </div>
    <div class="rr4 d-flex align-items-center">
      <div class="tb r4a d-flex align-items-center">
        <div class="ti sel"><svg class="ic"><use href="#sel"/></svg>选择</div><div class="arr"></div><div class="sepv"></div>
        <div class="ti"><svg class="ic"><use href="#lin"/></svg>直线</div>
        <div class="ti"><svg class="ic"><use href="#pln"/></svg>点加长度</div>
        <div class="ti"><svg class="ic"><use href="#arc"/></svg>三点画弧</div><div class="arr"></div>
        <div class="combo w55 d-flex align-items-center"><span></span><div class="arr"></div></div>
        <div class="ti"><svg class="ic"><use href="#r2d"/></svg>矩形</div><div class="sepv"></div>
        <div class="ti"><svg class="ic"><use href="#smt"/></svg>智能布置</div><div class="arr"></div><div class="sepv"></div>
        <div class="ti"><svg class="ic"><use href="#flt"/></svg>修改梁段属性</div>
        <div class="ti"><svg class="ic"><use href="#mrk"/></svg>原位标注</div><div class="arr"></div>
        <div class="ti"><svg class="ic"><use href="#rex"/></svg>重提梁跨</div><div class="arr"></div>
        <div class="ti"><svg class="ic"><use href="#brm"/></svg>梁跨数据复制</div><div class="arr"></div>
        <div class="ti"><svg class="ic"><use href="#bid"/></svg>批量识别梁支座</div>
        <div class="ti"><svg class="ic"><use href="#apl"/></svg>应用到同名梁</div>
        <span class="chev">»</span>
      </div>
      <div class="grp ms-1"></div>
    </div>

    <!-- CAD canvas -->
    <svg class="cad" width="1199" height="305" viewBox="167 168 1199 305">
      <rect x="707" y="249" width="128" height="224" fill="url(#hat)"/>
      <rect x="867" y="238" width="499" height="235" fill="url(#hat)"/>
      <path d="M198 341H453L477 244H499V260L475 356 462 355V366H189V353H174L167 325V244H171z" fill="#f0f000"/>
      <path d="M167 212H478V244H167zM489 168H510V207H489z" fill="#00f000"/>
      <path d="M500 228H825V249H500zM870 217H1366V238H870z" fill="#00f000"/>
      <path d="M520 217H825V228H520zM867 343H1366V364H867zM835 249H845V473H835z" fill="#f0f000"/>
      <path d="M706 473V229H1366" fill="none" stroke="#fff" stroke-width="1.500"/>
      <path d="M167 207H184V238H167zM478 207H520V238H478z" fill="#00f0ff"/>
      <path d="M845 168H867V473H845zM825 207H845V249H825z" fill="#0078e8"/>
      <path d="M846.500 249V345" stroke="#fff"/>
      <path d="M830 227L870 204V251z" fill="#ff0"/>
      <path d="M835 343H845V364H835zM998 341H1009V366H998z" fill="#7f00f0"/>
      <path d="M167 227.500H1366M167 353.500H1366M499.500 168V473M656.500 168V473M845.500 168V473M908.500 168V473" stroke="#f00"/>
      <circle cx="180" cy="227" r="12.500" fill="none" stroke="#0a7a20"/>
      <circle cx="180" cy="353" r="12.500" fill="none" stroke="#0a7a20"/>
      <circle cx="499" cy="180" r="12.500" fill="none" stroke="#0a7a20"/>
      <circle cx="846" cy="180" r="12.500" fill="none" stroke="#0a7a20"/>
      <text x="180" y="233" font-size="16" text-anchor="middle" fill="#c06070">B</text>
      <text x="180" y="359" font-size="16" text-anchor="middle" fill="#9090c0">0</text>
      <text x="499" y="186" font-size="16" text-anchor="middle" fill="#8a8a9a">3</text>
      <text x="846" y="186" font-size="16" text-anchor="middle" fill="#b08060">4</text>
      <path d="M222 423V380" stroke="#00f020" stroke-width="4"/><path d="M222 374l-4 9h8z" fill="#00f020"/>
      <path d="M222 423H260" stroke="#f00" stroke-width="4"/><path d="M271 423l-12-4v8z" fill="#f00"/>
      <path d="M231 377l4 4 4-4M235 381v6" stroke="#00e020" fill="none"/>
      <path d="M259 402l9 9M268 402l-9 9" stroke="#e01010"/>
      <text transform="translate(785,235) rotate(-90)" font-size="37" text-anchor="end" fill="#eee" xml:space="preserve">KL-4 (3)   200*600</text>
      <text transform="translate(833,278) rotate(-90)" font-size="34" text-anchor="end" fill="#ddd">(1)(0)(0)203(C20)</text>
      <text transform="translate(830,290) rotate(-90)" font-size="34" text-anchor="end" fill="#bbb">n(0)(1)2@3(C)</text>
      <text transform="translate(830,204) rotate(-90)" font-size="37" fill="#eee">300</text>
      <ellipse cx="772" cy="243" rx="13" ry="6" fill="none" stroke="#e040d8" stroke-width="3"/>
    </svg>

    <!-- snap toolbar -->
    <div class="rr5 d-flex align-items-end">
      <div class="tb r5a d-flex align-items-center">
        <div class="ti"><svg class="ic"><use href="#ort"/></svg>正交</div>
        <div class="ti sel2"><svg class="ic"><use href="#snp"/></svg>对象捕捉</div>
        <div class="ti"><svg class="ic"><use href="#dyn"/></svg>动态输入</div>
      </div>
      <div class="tb r5b d-flex align-items-center">
        <div class="grp"></div>
        <div class="ti"><svg class="ic"><use href="#xpt"/></svg>交点</div>
        <div class="ti sel"><svg class="ic"><use href="#prp"/></svg>垂点</div>
        <div class="ti sel"><svg class="ic"><use href="#mid"/></svg>中点</div>
        <div class="ti"><svg class="ic"><use href="#vtx"/></svg>顶点</div>
        <div class="ti"><svg class="ic"><use href="#crd"/></svg>坐标</div>
      </div>
      <div class="tb r5c d-flex align-items-center">
        <div class="combo w64 d-flex align-items-center text-dark">不偏移<div class="arr"></div></div>
        <div class="sepv"></div>
        <span>X=</span><div class="spin">0</div><span>mm</span>
        <span class="ms-2">Y=</span><div class="spin">0</div><span>mm</span>
        <div class="sepv"></div>
        <div class="ckb"></div><span class="text-dark">旋转</span><div class="spin">0.000</div><span>°</span>
      </div>
    </div>

    <div class="gridwrap d-flex">
      <div class="gripcol"><div class="closebox"></div></div>
      <div class="gridmain d-flex flex-column">
        <div class="subtb d-flex align-items-center">
          <div class="ti"><svg class="ic"><use href="#cpd"/></svg>复制跨数据</div>
          <div class="ti off"><svg class="ic"><use href="#pst"/></svg>粘贴跨数据</div>
          <span class="plain">输入当前列数据</span><span class="plain">删除当前列数据</span><span class="plain">页面设置</span><span class="plain">调换起始跨</span><span class="plain">悬臂钢筋代号</span>
        </div>
        <div class="gridbox d-flex flex-column">
          <table class="table table-bordered gg flex-shrink-0">
            <colgroup><col class="c31"><col class="c41"><col class="c81"><col class="c235"><col class="c81"><col class="c101"><col class="c70"><col class="c72"><col class="c41"><col class="c81"><col class="c80"><col class="c180"><col class="c81"><col class="c10"></colgroup>
            <thead>
              <tr><th rowspan="2"></th><th rowspan="2">跨号</th><th colspan="2">下部钢筋</th><th colspan="3">侧面钢筋</th><th rowspan="2">箍筋</th><th rowspan="2">肢数</th><th rowspan="2">次梁宽度</th><th rowspan="2">次梁加筋</th><th rowspan="2" class="hot">吊筋</th><th rowspan="2">吊筋锚固</th><th rowspan="2">箍</th></tr>
              <tr><th>下通长筋</th><th>下部钢筋</th><th>侧面通长筋</th><th>侧面原位标注筋</th><th>拉筋</th></tr>
            </thead>
            <tbody>
              <tr><td class="rh">1</td><td class="lk">1</td><td></td><td></td><td></td><td></td><td></td><td><span class="rb">ф</span>8@100/20</td><td>2</td><td>200/200/200/</td><td>0/0</td><td>2<span class="rb2">ф</span>16/2<span class="rb2">ф</span>16/2<span class="rb2">ф</span>14/2<span class="rb2">ф</span>16</td><td>20*d</td><td>m</td></tr>
              <tr><td class="rh">2</td><td class="lk">2</td><td></td><td>3<span class="rb2">ф</span>25</td><td></td><td>G4<span class="rb2">ф</span>12</td><td>(<span class="rb">ф</span>6)</td><td><span class="rb">ф</span>8@100/20</td><td>2</td><td>200</td><td>6</td><td>3<span class="rb2">ф</span>16</td><td>20*d</td><td>m</td></tr>
              <tr class="curr"><td class="rh">3</td><td class="lk">3</td><td></td><td></td><td></td><td></td><td></td><td><span class="rb">ф</span>8@100/20</td><td>2</td><td></td><td></td><td class="cel"></td><td></td><td>m</td></tr>
            </tbody>
          </table>
          <div class="hbar2 d-flex align-items-center">
            <svg width="12" height="12"><use href="#cltd"/></svg>
            <div class="hthumb2"></div>
            <svg class="ms-auto" width="12" height="12"><use href="#crtd"/></svg>
          </div>
        </div>
      </div>
    </div>
  </div>
</div>

<!-- status -->
<div class="statusb d-flex">
  <div class="s1 lat">X=11433 Y=5163</div>
  <div class="s2">层高:<span class="lat">4.5m</span></div>
  <div class="s3">底标高:<span class="lat">-0.05m</span></div>
  <div class="s4 lat">1(1)</div>
  <div class="s5">按鼠标左键指定第一个角点，或拾取构件图元</div>
  <div class="s6 lat">273.6 FPS</div>
</div>

<!-- taskbar -->
<div class="taskb d-flex align-items-center">
  <div class="startb d-flex align-items-center justify-content-center">
    <svg width="16" height="16" viewBox="0 0 16 16"><path d="M0 2.300l7-1v6.300H0zM8 1.100L16 0v7.600H8zM0 8.500h7v6.300l-7-1zM8 8.500h8V16l-8-1.100z" fill="#fff"/></svg>
  </div>
  <div class="search d-flex align-items-center">
    <svg class="q" width="22" height="22" viewBox="0 0 22 22"><circle cx="11" cy="11" r="9" fill="none" stroke="#ddd" stroke-width="2.500"/></svg>
    在这里输入你要搜索的内容
    <svg class="mic" width="12" height="20" viewBox="0 0 12 20"><rect x="3.500" y="1" width="5" height="11" rx="2.500" fill="none" stroke="#999"/><path d="M1 9c0 6 10 6 10 0M6 15v3M3 18.500h6" fill="none" stroke="#999"/></svg>
  </div>
  <div class="tk1 d-flex align-items-center justify-content-center"><svg viewBox="0 0 24 24"><path d="M6 6v12h12V6zM3 8v8M21 8v8" fill="none" stroke="#fff" stroke-width="1.500"/></svg></div>
  <div class="tk1 d-flex align-items-center justify-content-center"><svg viewBox="0 0 24 24"><path d="M12 12C4 12 2 8 4 4s8-3 8 8zM12 12c0-8 4-10 8-8s3 8-8 8zM12 12c8 0 10 4 8 8s-8 3-8-8zM12 12c0 8-4 10-8 8s-3-8 8-8z" fill="#e4e8ec"/></svg></div>
  <div class="tk1 d-flex align-items-center justify-content-center"><svg viewBox="0 0 24 24"><circle cx="12" cy="13" r="8" fill="none" stroke="#eee" stroke-width="3"/><path d="M5 13h14" stroke="#eee" stroke-width="2.500"/><path d="M3 22c-2-3 8-18 19-20" fill="none" stroke="#eee"/></svg></div>
  <div class="tk1 d-flex align-items-center justify-content-center"><svg viewBox="0 0 24 24"><circle cx="10" cy="13" r="8" fill="none" stroke="#bbb" stroke-width="2"/><circle cx="11" cy="14" r="4" fill="none" stroke="#bbb" stroke-width="2"/><path d="M17 2c3 0 3 3 3 5l2 3H12l2-3c0-2 0-5 3-5z" fill="#f0a820"/></svg></div>
  <div class="tsep mx-0"></div>
  <div class="tk2 ms-3 d-flex align-items-center justify-content-center"><svg viewBox="0 0 24 24"><path d="M21 14H8c0 5 8 6 12 3v4c-8 3-17 0-17-9S14-1 20 6c2 2 2 5 1 8zM8 10h8c0-4-7-4-8 0z" fill="#1a8ce8"/></svg></div>
  <div class="tk2 d-flex align-items-center justify-content-center"><svg viewBox="0 0 24 24"><circle cx="12" cy="13" r="8" fill="none" stroke="#2a9ae8" stroke-width="3.500"/><path d="M5 13h14" stroke="#2a9ae8" stroke-width="2.500"/><path d="M3 22c-2-3 8-18 19-20" fill="none" stroke="#e8c030" stroke-width="1.500"/></svg></div>
  <div class="tk2 on d-flex align-items-center justify-content-center"><svg viewBox="0 0 24 24"><path d="M2 4h8l2 3h10v15H2z" fill="#f6d468"/><path d="M2 9h20v3H2z" fill="#fff0b0"/><path d="M9 14h6v8H9z" fill="#3a9ae0"/></svg></div>
  <div class="tk2 on d-flex align-items-center justify-content-center"><svg viewBox="0 0 24 24"><circle cx="12" cy="12" r="11" fill="#5ab82a"/><circle cx="12" cy="12" r="8" fill="#e6f4d8"/><path d="M6 12c2-6 10-6 12 0z" fill="#5ab82a"/><path d="M5 12h14" stroke="#3a8a1a" stroke-width="2"/></svg></div>
  <div class="tk2 on d-flex align-items-center justify-content-center"><svg viewBox="0 0 24 24"><rect x="1" y="1" width="22" height="22" rx="3" fill="#e88a20"/><path d="M5 5h13v15H5z" fill="#fbe9b8"/><path d="M7 9h8M7 12h8M7 15h8" stroke="#a66"/><path d="M13 15l7-12" stroke="#c03020" stroke-width="2"/></svg></div>
  <div class="tk2 act on d-flex align-items-center justify-content-center"><svg viewBox="0 0 24 24"><rect x="1" y="1" width="22" height="22" rx="5" fill="#1a8ce8"/><path d="M12 5v14M6 11h12" stroke="#fff" stroke-width="2.500" stroke-linecap="round"/></svg></div>
  <div class="tk2 on d-flex align-items-center justify-content-center"><svg viewBox="0 0 24 24"><path d="M21 3C12-1 3 4 3 13s9 11 14 8c4-2 4-7 1-9h-6l2 4h2c0 2-5 2-6-2-1-5 5-9 11-6z" fill="#1a8ce8"/></svg></div>
  <div class="tsep ms-3"></div>
  <span class="trayt ms-2 ps-1">链接</span>
  <div class="cpu"><div>57%</div><div>CPU使用</div></div>
  <div class="tray d-flex align-items-center">
    <svg class="ic" viewBox="0 0 16 16"><path d="M2 11l6-6 6 6" fill="none" stroke="#eee" stroke-width="1.300"/></svg>
    <svg class="ic" viewBox="0 0 16 16"><path d="M8 2c3 0 4 2 4 5l2 5H2l2-5c0-3 1-5 4-5z" fill="#eee"/><path d="M6 13h4v1H6z" fill="#eee"/></svg>
    <svg class="ic" viewBox="0 0 16 16"><path d="M5 5h10v7H5zM1 3v4M3 3v4M1 7h3" fill="#ddd" stroke="#eee"/></svg>
    <svg class="ic" viewBox="0 0 16 16"><path d="M2 15c0-6 5-12 13-13M5 15c0-4 4-9 10-10M8 15c0-3 3-6 7-7" fill="none" stroke="#ccc" stroke-dasharray="2 1"/></svg>
    <svg class="ic" viewBox="0 0 16 16"><path d="M1 6h3l4-4v12l-4-4H1z" fill="none" stroke="#eee"/><path d="M10 5c2 2 2 4 0 6M12.500 3c3 3 3 7 0 10" fill="none" stroke="#eee"/></svg>
    <svg width="22" height="16" viewBox="0 0 22 16"><path d="M.5.500h21v15H.5z" fill="none" stroke="#eee"/><path d="M3 4h16M3 7h16M3 10h16" stroke="#eee" stroke-dasharray="1.500 1"/><path d="M6 13h10" stroke="#eee"/></svg>
    <span class="trayt text-white fs-5 lh-1">A</span>
    <svg class="ic ms-2" viewBox="0 0 16 16"><rect x="1" y="0" width="14" height="16" rx="3" fill="#f05a22"/><path d="M11 5c-1-2-6-2-6 1s6 2 6 5-5 3-6 1" fill="none" stroke="#fff" stroke-width="2"/></svg>
  </div>
  <div class="clock"><div>14:41</div><div>2018/8/22</div></div>
  <svg class="notif" width="20" height="20" viewBox="0 0 20 20"><path d="M2 2h16v13h-5l-3 3-3-3H2z" fill="none" stroke="#eee" stroke-width="1.300"/></svg>
</div>
</body>
</html>
